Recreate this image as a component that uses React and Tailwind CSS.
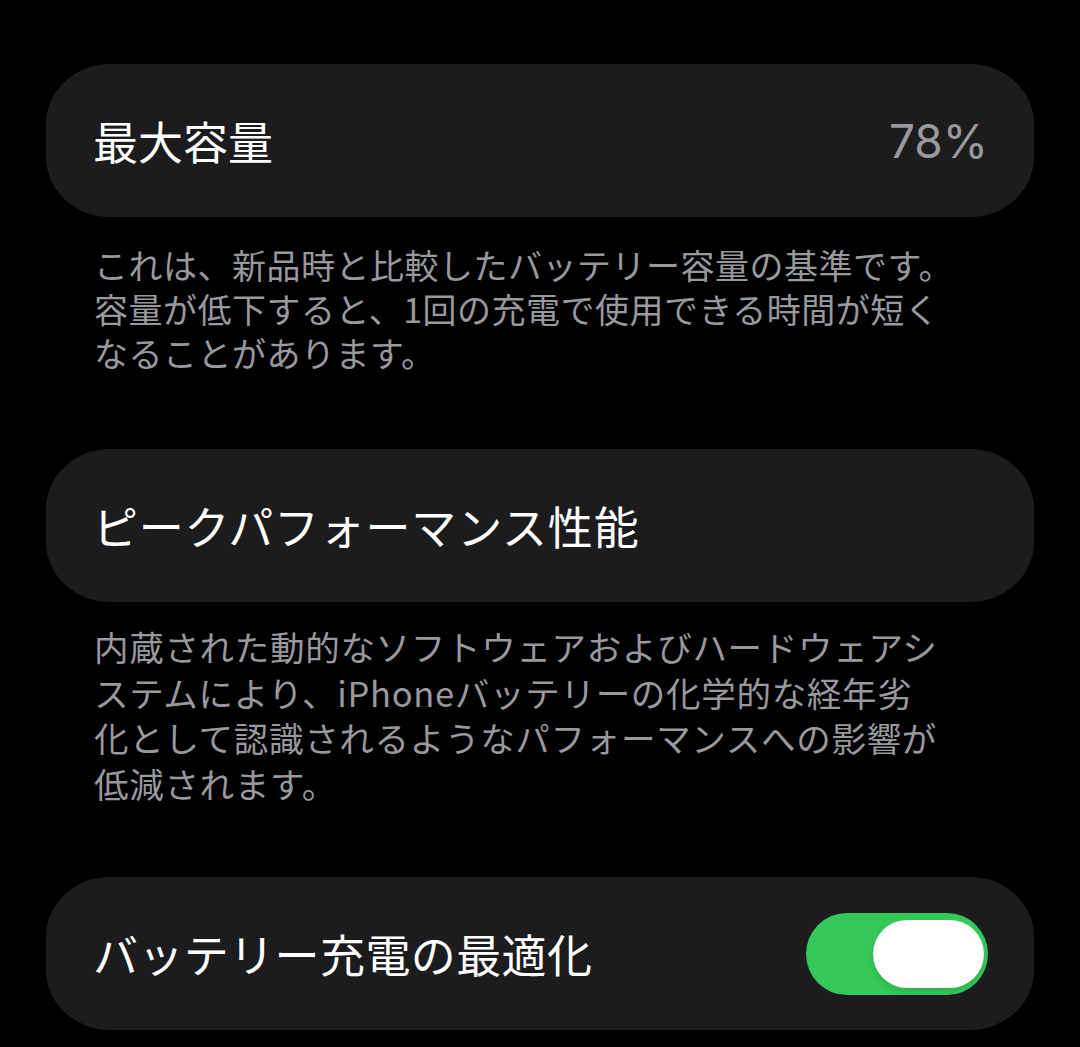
import React, { useState } from 'react';

const Card = ({ children }) => (
    <div className="h-[153px] w-full rounded-[64px_/_60px] bg-[#1c1c1e] flex items-center justify-between pl-[47px] pr-[46px]">
        {children}
    </div>
);

const App = () => {
    const [optimized, setOptimized] = useState(true);

    return (
        <div
            className="w-[1080px] h-[1047px] bg-black overflow-hidden flex flex-col px-[46px] pt-[64px] text-white"
            style={{ fontFamily: '"Noto Sans CJK JP", "Noto Sans", sans-serif' }}
        >
            <Card>
                <span className="text-[45px] leading-none">最大容量</span>
                <span className="text-[46px] leading-none text-[#98989d]" style={{ fontFamily: 'Inter, "Noto Sans", sans-serif' }}>
                    78%
                </span>
            </Card>

            <p className="mt-[26px] pl-[48px] text-[34px] leading-[44px] tracking-[0.5px] text-[#98989e] whitespace-nowrap">
                これは、新品時と比較したバッテリー容量の基準です。
                <br />
                容量が低下すると、1回の充電で使用できる時間が短く
                <br />
                なることがあります。
            </p>

            <div className="mt-[74px]">
                <Card>
                    <span className="text-[45px] leading-none tracking-[0.8px]">ピークパフォーマンス性能</span>
                </Card>
            </div>

            <p className="mt-[22px] pl-[48px] text-[34.5px] leading-[45.5px] tracking-[0.7px] text-[#98989e] whitespace-nowrap">
                内蔵された動的なソフトウェアおよびハードウェアシ
                <br />
                ステムにより、iPhoneバッテリーの化学的な経年劣
                <br />
                化として認識されるようなパフォーマンスへの影響が
                <br />
                低減されます。
            </p>

            <div className="mt-[71px]">
                <Card>
                    <span className="text-[45px] leading-none tracking-[0.4px]">バッテリー充電の最適化</span>
                    <button
                        onClick={() => setOptimized(!optimized)}
                        className={`w-[182px] h-[82px] rounded-full flex items-center px-[4px] ${optimized ? 'bg-[#34c759] justify-end' : 'bg-[#39393d] justify-start'}`}
                    >
                        <span className="w-[111px] h-[68px] rounded-full bg-white shadow-md" />
                    </button>
                </Card>
            </div>
        </div>
    );
};

export default App;
